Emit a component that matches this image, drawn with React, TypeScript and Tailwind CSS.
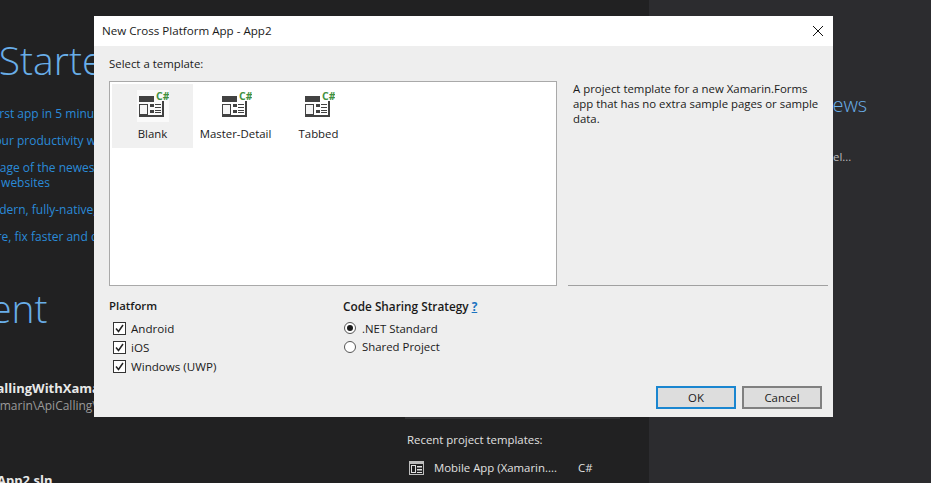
import React from "react";

const ui = "font-['Open_Sans','Noto_Sans',sans-serif]";
const dlgText = "text-[11.4px] text-[#1a1a1a]";

const TemplateIcon = ({ selected }: { selected?: boolean }) => (
  <svg width="32" height="32" viewBox="0 0 32 32" className={selected ? "bg-[#fafafa]" : ""}>
    <rect x="2" y="6" width="15" height="6" fill="#424242" />
    <rect x="2.5" y="14.5" width="8" height="12" fill="#f6f6f6" stroke="#424242" />
    <rect x="2" y="24" width="9" height="3" fill="#424242" />
    <rect x="11" y="25" width="16" height="2" fill="#424242" />
    <rect x="25" y="11" width="2" height="16" fill="#424242" />
    <rect x="13" y="14" width="4" height="3" fill="#424242" />
    <rect x="13" y="20" width="4" height="3" fill="#424242" />
    <rect x="18" y="14" width="6" height="1" fill="#424242" />
    <rect x="18" y="17" width="6" height="1" fill="#424242" />
    <rect x="18" y="20" width="6" height="1" fill="#424242" />
    <rect x="18" y="22" width="6" height="1" fill="#424242" />
    <text x="19" y="10" fontSize="10.5" fontWeight="700" fill="#3f9142" fontFamily="Open Sans, sans-serif">C#</text>
  </svg>
);

const Tile = ({ label, selected }: { label: string; selected?: boolean }) => (
  <div className={`w-[81px] h-[64px] flex flex-col items-center pt-[6px] ${selected ? "bg-[#f0f0f0]" : ""}`}>
    <TemplateIcon selected={selected} />
    <span className={`${dlgText} leading-[16px] mt-[4px] whitespace-nowrap`}>{label}</span>
  </div>
);

const Check = ({ label }: { label: string }) => (
  <div className="flex items-center h-[19px] pl-[4px]">
    <span className="w-[13px] h-[13px] border border-[#333] bg-white flex items-center justify-center">
      <svg width="11" height="11" viewBox="0 0 11 11">
        <path d="M2 5.5 4.5 8.5 9 2" fill="none" stroke="#222" strokeWidth="1.5" />
      </svg>
    </span>
    <span className="ml-[5px] text-[11.6px] text-[#1a1a1a]">{label}</span>
  </div>
);

const Radio = ({ label, checked }: { label: string; checked?: boolean }) => (
  <div className="flex items-center h-[18.5px] pl-[1px]">
    <span className="w-[12px] h-[12px] rounded-full border border-[#555] bg-white flex items-center justify-center">
      {checked && <span className="w-[6px] h-[6px] rounded-full bg-[#1a1a1a]" />}
    </span>
    <span className={`ml-[6px] ${dlgText}`}>{label}</span>
  </div>
);

const Dialog = () => (
  <div className="absolute left-[94px] top-[16px] w-[739px] h-[401px] bg-[#eeeeee] flex flex-col text-[#1a1a1a]">
    <div className="h-[30px] bg-white flex items-center justify-between pl-[8px] pr-[9px] shrink-0">
      <span className="text-[11.6px]">New Cross Platform App - App2</span>
      <svg width="12" height="12" viewBox="0 0 12 12">
        <path d="M1 1l10 10M11 1 1 11" stroke="#111" strokeWidth="1" fill="none" />
      </svg>
    </div>
    <div className="flex-1 flex flex-col pl-[15px] pr-[5px]">
      <div className={`${dlgText} leading-[16px] mt-[10px] h-[25px]`}>Select a template:</div>
      <div className="flex">
        <div className="w-[448px] h-[205px] border border-[#a9a9a9] bg-white p-[2px] flex items-start gap-[2px]">
          <Tile label="Blank" selected />
          <Tile label="Master-Detail" />
          <Tile label="Tabbed" />
        </div>
        <div className={`ml-[11px] flex-1 border-b border-[#a0a0a0] pl-[5px] ${dlgText} leading-[15px]`}>
          <p className="w-[250px]">A project template for a new Xamarin.Forms app that has no extra sample pages or sample data.</p>
        </div>
      </div>
      <div className="flex mt-[12px]">
        <div className="w-[234px]">
          <div className={`${dlgText} leading-[16px] font-semibold mb-[5px]`}>Platform</div>
          <Check label="Android" />
          <Check label="iOS" />
          <Check label="Windows (UWP)" />
        </div>
        <div>
          <div className="text-[11.8px] text-[#1a1a1a] leading-[16px] font-semibold mb-[5px]">
            Code Sharing Strategy <span className="font-bold text-[#1a73c0] underline">?</span>
          </div>
          <Radio label=".NET Standard" checked />
          <Radio label="Shared Project" />
        </div>
      </div>
      <div className={`flex justify-end gap-[6px] pr-[6px] mt-[10px] ${dlgText}`}>
        <button className="w-[80px] h-[23px] bg-[#dddddd] border-2 border-[#1a86d0]">OK</button>
        <button className="w-[80px] h-[23px] bg-[#dddddd] border-2 border-[#808080]">Cancel</button>
      </div>
    </div>
  </div>
);

const App = () => (
  <div className={`relative w-[931px] h-[483px] overflow-hidden flex bg-[#212122] ${ui}`}>
    {/* start page behind the dialog */}
    <div className="w-[649px] h-full overflow-hidden flex shrink-0">
      <div className="w-[405px] shrink-0">
        <div className="-ml-[74px] pt-[33px]">
          <div className="text-[39px] leading-[54px] font-light text-[#69aee8] whitespace-nowrap">Get Started</div>
        </div>
        <div className="-ml-[68px] mt-[19px] text-[12px] text-[#2a8ad8] whitespace-nowrap leading-[15px]">
          <div className="mb-[12px]">Build your first app in 5 minutes!</div>
          <div className="mb-[12px]">Maximize your productivity with these tips</div>
          <div className="mb-[12px]">Take advantage of the newest technologies<br />and reliable websites</div>
          <div className="mb-[12px]">Develop modern, fully-native, apps</div>
          <div>Ship software, fix faster and deliver</div>
        </div>
        <div className="-ml-[73px] mt-[37px] text-[39px] leading-[54px] font-light text-[#69aee8] whitespace-nowrap">Recent</div>
        <div className="mt-[44px] whitespace-nowrap">
          <div className="-ml-[33px] text-[13px] leading-[18px] font-bold text-[#e8e8e8]">ApiCallingWithXamarin</div>
          <div className="-ml-[29px] text-[12px] leading-[18px] text-[#9a9a9a]">C:\Xamarin\ApiCalling\</div>
        </div>
        <div className="-ml-[3px] mt-[56px] text-[13px] leading-[18px] font-bold text-[#e8e8e8] whitespace-nowrap">App2.sln</div>
      </div>
      <div className="text-[#e0e0e0] text-[11.4px] whitespace-nowrap">
        <div className="mt-[417px] h-[2px] w-[215px] bg-[#333335]" />
        <div className="pl-[2px] pt-[13px] leading-[16px]">Recent project templates:</div>
        <div className="pl-[2px] flex items-center mt-[12px] h-[16px]">
          <svg width="15" height="14" viewBox="0 0 15 14" className="ml-[2px]">
            <rect x="0.5" y="0.5" width="14" height="13" fill="none" stroke="#bdbdbd" />
            <rect x="0" y="0" width="15" height="3" fill="#bdbdbd" />
            <rect x="2.5" y="4.5" width="4" height="7" fill="none" stroke="#e0e0e0" />
            <rect x="8" y="5" width="5" height="1.5" fill="#e0e0e0" />
            <rect x="8" y="8" width="5" height="1.5" fill="#e0e0e0" />
            <rect x="8" y="11" width="5" height="1" fill="#e0e0e0" />
          </svg>
          <span className="ml-[10px] w-[144px]">Mobile App (Xamarin....</span>
          <span>C#</span>
        </div>
      </div>
    </div>
    <div className="flex-1 bg-[#2c2c2f] pl-[184px] pt-[90px] whitespace-nowrap">
      <div className="-ml-[15px] text-[20px] leading-[30px] font-light text-[#69aee8]">News</div>
      <div className="mt-[29px] text-[11.4px] leading-[16px] text-[#bbbbbb]">el...</div>
    </div>
    <Dialog />
  </div>
);

export default App;
